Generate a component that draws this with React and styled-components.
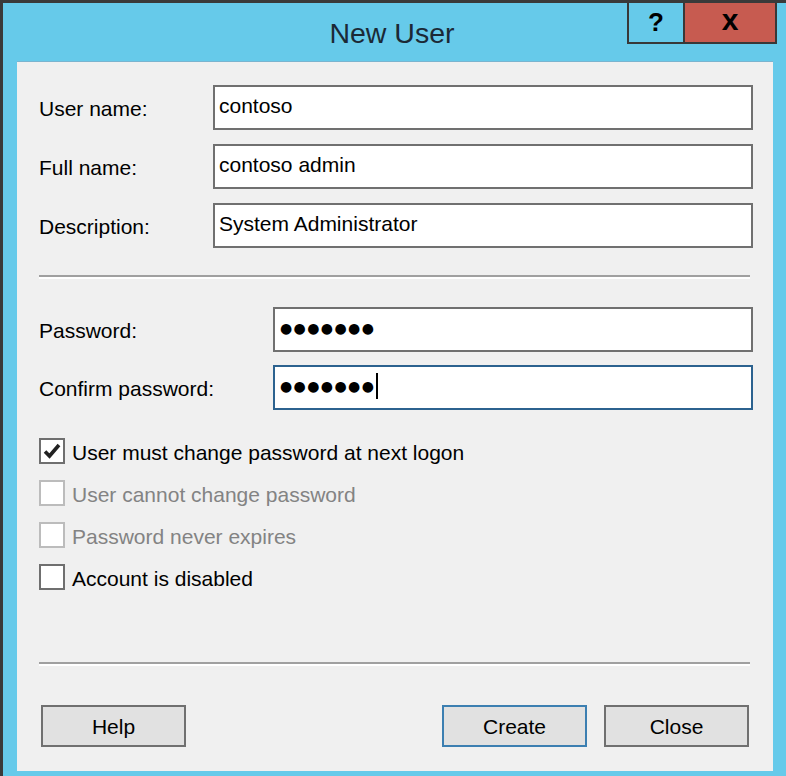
import React from 'react';
import styled, { createGlobalStyle } from 'styled-components';

const GlobalStyle = createGlobalStyle`
  html, body {
    margin: 0;
    padding: 0;
  }
  body {
    font-family: "Liberation Sans", Arial, sans-serif;
    background: #66caea;
  }
`;

const Window = styled.div`
  width: 786px;
  height: 776px;
  box-sizing: border-box;
  border-top: 3px solid #3a3a3a;
  border-left: 3px solid #3a3a3a;
  background: #66caea;
  display: flex;
  flex-direction: column;
  overflow: hidden;
`;

const TitleBar = styled.div`
  height: 58px;
  flex-shrink: 0;
  display: grid;
  grid-template-columns: 1fr auto 1fr;
  align-items: center;
  padding-right: 5px;
`;

const Title = styled.div`
  font-size: 28.5px;
  color: #1b2936;
  line-height: 1;
  padding-top: 2px;
`;

const CaptionButtons = styled.div`
  justify-self: end;
  align-self: start;
  margin-right: 4px;
  display: flex;
  border: 2px solid #383838;
  border-top: none;
  height: 39px;
`;

const CaptionButton = styled.div`
  width: ${p => p.$width}px;
  background: ${p => p.$bg || 'transparent'};
  border-left: ${p => (p.$divider ? '2px solid #383838' : 'none')};
  display: flex;
  align-items: center;
  justify-content: center;
  font-weight: bold;
  font-size: ${p => p.$size}px;
  line-height: 1;
  color: #000;
  padding-bottom: ${p => p.$lift || 0}px;
  box-sizing: border-box;
`;

const Client = styled.div`
  flex: 1;
  margin: 0 13px 5px 14px;
  background: #f0f0f0;
  border-top: 1px solid #7ab4cf;
  padding: 23px 20px 0 22px;
  display: flex;
  flex-direction: column;
`;

const FieldGrid = styled.div`
  display: grid;
  grid-template-columns: ${p => p.$labelWidth}px 1fr;
  row-gap: ${p => p.$gap}px;
  align-items: center;
`;

const Label = styled.label`
  font-size: 21px;
  color: #000;
  padding-top: 2px;
`;

const TextBox = styled.div`
  height: 45px;
  box-sizing: border-box;
  border: 2px solid ${p => (p.$focused ? '#2c628f' : '#707070')};
  background: #fff;
  padding: 0 4px 3px;
  display: flex;
  align-items: center;
  font-size: 21px;
  color: #000;
  white-space: nowrap;
`;

const Dots = styled.span`
  font-family: "DejaVu Sans", sans-serif;
  font-size: 14px;
  letter-spacing: 1.4px;
  padding-left: 1px;
`;

const Caret = styled.span`
  display: inline-block;
  width: 2px;
  height: 26px;
  background: #000;
  margin-left: 1px;
`;

const Separator = styled.div`
  height: 2px;
  background: #a0a0a0;
  border-bottom: 2px solid #fff;
  margin: ${p => p.$top}px 3px ${p => p.$bottom}px 0;
`;

const CheckList = styled.div`
  margin-top: 28px;
  display: flex;
  flex-direction: column;
  gap: 16px;
`;

const CheckRow = styled.div`
  display: flex;
  align-items: center;
  gap: 7px;
  height: 26px;
  font-size: 21px;
  color: ${p => (p.$disabled ? '#838383' : '#000')};
`;

const CheckText = styled.span`
  padding-top: 4px;
`;

const Box = styled.span`
  width: 26px;
  height: 26px;
  flex-shrink: 0;
  box-sizing: border-box;
  border: 2px solid ${p => (p.$disabled ? '#bcbcbc' : '#6f6f6f')};
  background: #fff;
  display: flex;
  align-items: center;
  justify-content: center;
`;

const ButtonRow = styled.div`
  display: flex;
  align-items: center;
  margin: 0 4px 0 2px;
`;

const Spacer = styled.div`
  flex: 1;
`;

const Button = styled.button`
  width: 145px;
  height: 42px;
  box-sizing: border-box;
  border: 2px solid ${p => (p.$primary ? '#3c7fb1' : '#707070')};
  background: #e1e1e1;
  font-family: "Liberation Sans", Arial, sans-serif;
  font-size: 21px;
  color: #000;
  padding: 2px 0 0;
  margin-left: ${p => p.$gap || 0}px;
`;

const Check = () => (
  <svg width="20" height="20" viewBox="0 0 20 20">
    <path d="M3 10.5 L7.5 15 L17 4" fill="none" stroke="#222" strokeWidth="3.6" />
  </svg>
);

const options = [
  { label: 'User must change password at next logon', checked: true },
  { label: 'User cannot change password', disabled: true },
  { label: 'Password never expires', disabled: true },
  { label: 'Account is disabled' },
];

export default function App() {
  return (
    <>
      <GlobalStyle />
      <Window>
        <TitleBar>
          <div />
          <Title>New User</Title>
          <CaptionButtons>
            <CaptionButton $width={54} $size={26} $lift={2}>?</CaptionButton>
            <CaptionButton $width={92} $size={30} $bg="#c75b50" $divider $lift={6}>x</CaptionButton>
          </CaptionButtons>
        </TitleBar>
        <Client>
          <FieldGrid $labelWidth={174} $gap={14}>
            <Label>User name:</Label>
            <TextBox>contoso</TextBox>
            <Label>Full name:</Label>
            <TextBox>contoso admin</TextBox>
            <Label>Description:</Label>
            <TextBox>System Administrator</TextBox>
          </FieldGrid>

          <Separator $top={27} $bottom={28} />

          <FieldGrid $labelWidth={234} $gap={13}>
            <Label>Password:</Label>
            <TextBox><Dots>●●●●●●●</Dots></TextBox>
            <Label>Confirm password:</Label>
            <TextBox $focused><Dots>●●●●●●●</Dots><Caret /></TextBox>
          </FieldGrid>

          <CheckList>
            {options.map(o => (
              <CheckRow key={o.label} $disabled={o.disabled}>
                <Box $disabled={o.disabled}>{o.checked && <Check />}</Box>
                <CheckText>{o.label}</CheckText>
              </CheckRow>
            ))}
          </CheckList>

          <Separator $top={72} $bottom={39} />

          <ButtonRow>
            <Button>Help</Button>
            <Spacer />
            <Button $primary>Create</Button>
            <Button $gap={17}>Close</Button>
          </ButtonRow>
        </Client>
      </Window>
    </>
  );
}
